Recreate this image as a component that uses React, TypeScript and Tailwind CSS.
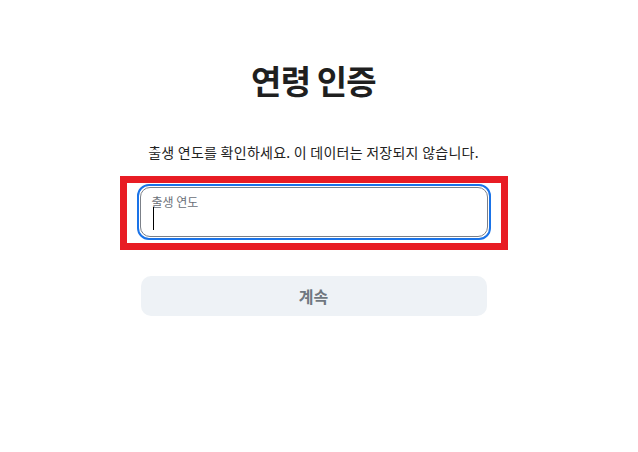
export default function App() {
  return (
    <div className="min-h-screen bg-white font-['Noto_Sans_CJK_KR',sans-serif] text-[#1f1f1f]">
      <div className="ml-[140px] flex w-[347px] flex-col items-center pt-[64px]">
        <h1 className="text-[33px] font-semibold leading-none tracking-tight">연령 인증</h1>
        <p className="mt-[48px] whitespace-nowrap text-[14px] leading-none tracking-[0.25px] text-[#222]">
          출생 연도를 확인하세요. 이 데이터는 저장되지 않습니다.
        </p>

        {/* highlighted field */}
        <div className="mt-[17px] w-[388px] border-[7px] border-[#e81c24] px-[10px] pb-[3px] pt-[1px]">
          <div className="rounded-[12px] border-2 border-[#1a73e8] p-[1px]">
            <div className="relative h-[50px] rounded-[10px] border border-[#7b8088] px-[11px] pt-[8px]">
              <div className="text-[12px] leading-none text-[#6b7078]">출생 연도</div>
              <span className="absolute left-[12px] top-[19px] h-[23px] w-px bg-black" />
            </div>
          </div>
        </div>

        <button className="mt-[26px] h-[40px] w-[346px] rounded-[10px] bg-[#eef2f6] text-[16px] font-bold text-[#707780]">
          계속
        </button>
      </div>
    </div>
  )
}
